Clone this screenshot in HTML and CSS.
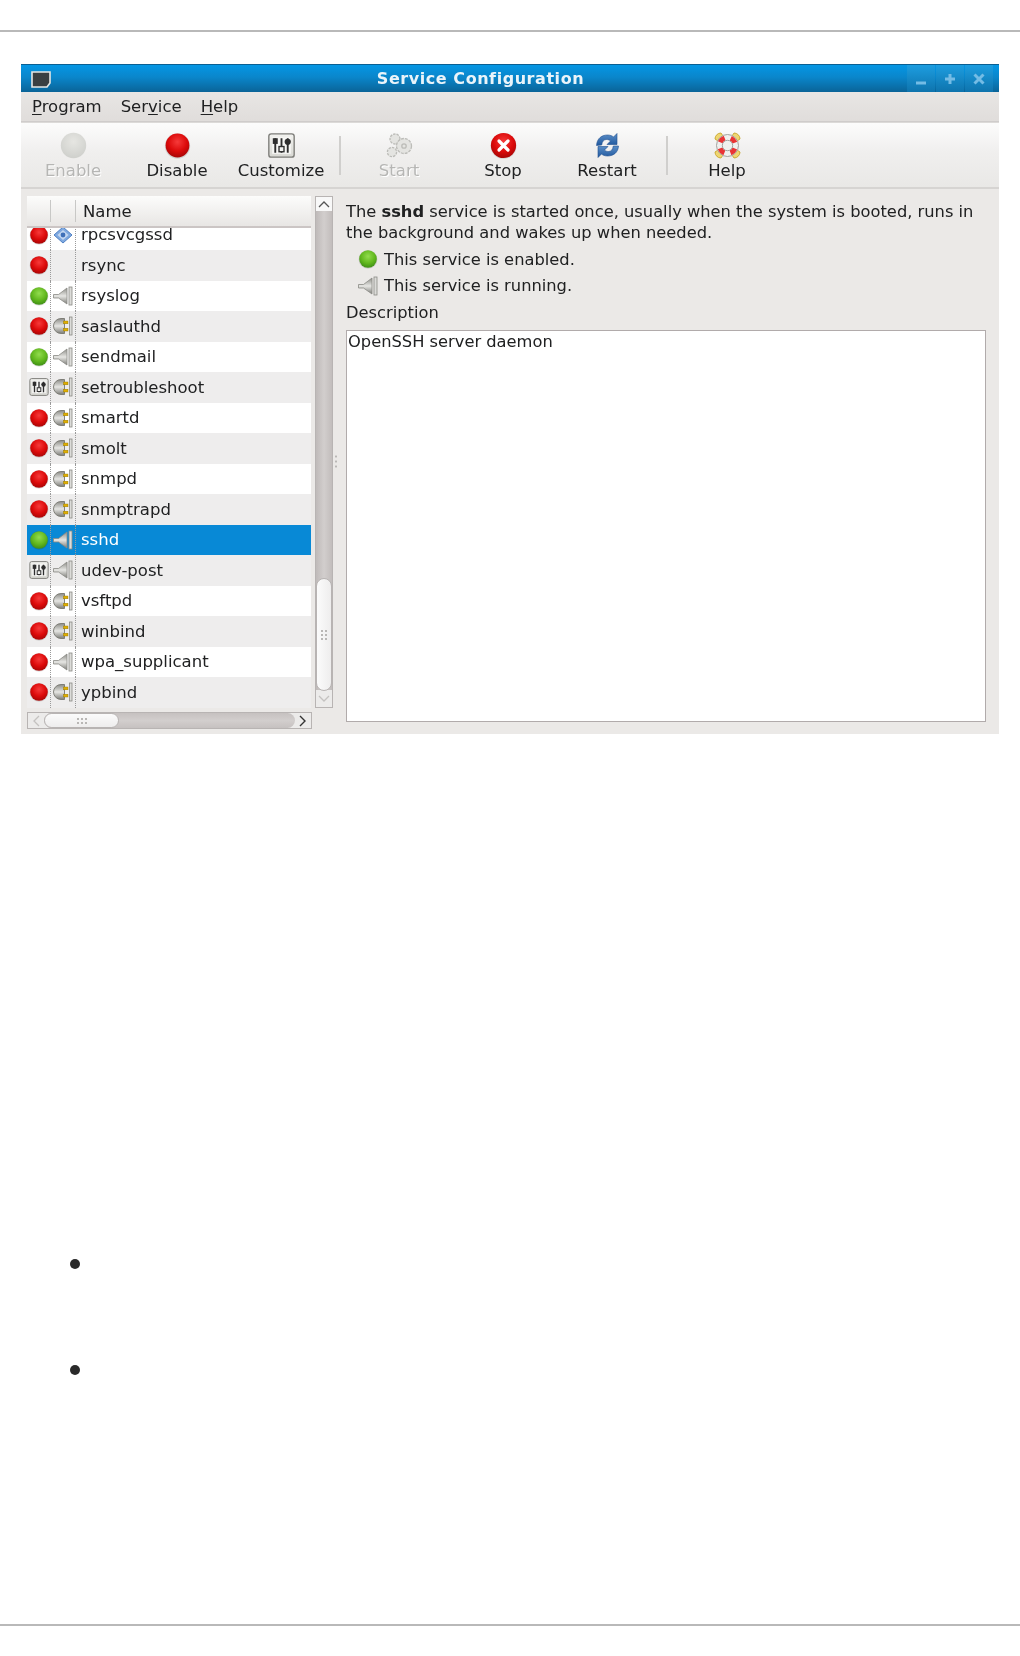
FILE: index.html
```html
<!DOCTYPE html>
<html lang="en">
<head>
  <meta charset="UTF-8" />
  <title>Service Configuration</title>
  <link rel="stylesheet" href="styles.css">
</head>
<body>
  <!-- shared icons -->
  <svg class="sprite" aria-hidden="true">
    <defs>
      <radialGradient id="g-red" cx="50%" cy="35%" r="65%">
        <stop offset="0" stop-color="#f63a3a"/><stop offset=".6" stop-color="#dc0a0a"/><stop offset="1" stop-color="#a80606"/>
      </radialGradient>
      <radialGradient id="g-green" cx="50%" cy="35%" r="65%">
        <stop offset="0" stop-color="#92dc4e"/><stop offset=".6" stop-color="#62b81e"/><stop offset="1" stop-color="#3f8f16"/>
      </radialGradient>
      <radialGradient id="g-off" cx="50%" cy="35%" r="65%">
        <stop offset="0" stop-color="#e6e6e2"/><stop offset="1" stop-color="#cfd0cc"/>
      </radialGradient>
      <linearGradient id="g-metal" x1="0" y1="0" x2="0" y2="1">
        <stop offset="0" stop-color="#8d8d88"/><stop offset=".5" stop-color="#e6e6e3"/><stop offset="1" stop-color="#7d7d78"/>
      </linearGradient>
      <linearGradient id="g-blue" x1="0" y1="0" x2="0" y2="1">
        <stop offset="0" stop-color="#5b8fc8"/><stop offset="1" stop-color="#20589e"/>
      </linearGradient>
      <linearGradient id="g-bezel" x1="0" y1="0" x2="0" y2="1">
        <stop offset="0" stop-color="#f2f2ef"/><stop offset="1" stop-color="#d8d8d3"/>
      </linearGradient>
      <symbol id="led-red" viewBox="0 0 20 20">
        <circle cx="10" cy="10.4" r="9.4" fill="#000" opacity=".12"/>
        <circle cx="10" cy="10" r="8.8" fill="url(#g-red)"/>
      </symbol>
      <symbol id="led-green" viewBox="0 0 20 20">
        <circle cx="10" cy="10.4" r="9.4" fill="#000" opacity=".12"/>
        <circle cx="10" cy="10" r="8.8" fill="url(#g-green)"/>
      </symbol>
      <symbol id="led-off" viewBox="0 0 20 20">
        <circle cx="10" cy="10" r="9.4" fill="url(#g-off)"/>
      </symbol>
      <symbol id="plug-on" viewBox="0 0 20 20">
        <path d="M0.5 8.500h5l8.500-6.500v16l-8.500-6h-5z" fill="url(#g-metal)" stroke="#8a8a85" stroke-width=".8"/>
        <rect x="16" y="1" width="3" height="18" fill="#dcdcd9" stroke="#8a8a85" stroke-width=".8"/>
      </symbol>
      <symbol id="plug-off" viewBox="0 0 20 20">
        <path d="M11.500 2.500h-3.500a7.500 7.500 0 0 0 0 15h3.500z" fill="url(#g-metal)" stroke="#77776f" stroke-width=".9"/>
        <rect x="10.500" y="5" width="4.500" height="2.800" fill="#e0ae00" stroke="#8f7400" stroke-width=".4"/>
        <rect x="10.500" y="12.200" width="4.500" height="2.800" fill="#e0ae00" stroke="#8f7400" stroke-width=".4"/>
        <rect x="16.400" y="1" width="2.600" height="18" fill="#dcdcd9" stroke="#8a8a85" stroke-width=".8"/>
      </symbol>
      <symbol id="question" viewBox="0 0 20 20">
        <path d="M10 2l9 8-9 8-9-8z" fill="#7fa9e0" stroke="#4f80c4"/>
        <path d="M10 5l5.500 5-5.500 5-5.500-5z" fill="#fff" opacity=".55"/>
        <circle cx="10" cy="10" r="2.400" fill="#3f70b8"/>
      </symbol>
      <symbol id="custom" viewBox="0 0 26 24">
        <rect x=".8" y=".8" width="24.400" height="22.400" rx="2.400" fill="url(#g-bezel)" stroke="#7c7c78" stroke-width="1.300"/>
        <rect x="4" y="4" width="18" height="16" fill="#f6f6f4"/>
        <path d="M7 5v14M13 5v14M19 5v14" stroke="#2e2e2e" stroke-width="1.800"/>
        <rect x="4.600" y="5" width="4.800" height="5.500" fill="#2e2e2e"/>
        <rect x="10.600" y="13" width="4.800" height="5" fill="#f2f2f0" stroke="#2e2e2e" stroke-width="1.300"/>
        <circle cx="19" cy="8.500" r="3" fill="#2e2e2e"/>
      </symbol>
      <symbol id="gears" viewBox="0 0 27 27">
        <g fill="#e4e4e1" stroke="#bcbcb8" stroke-width="1.300">
          <circle cx="9" cy="7" r="5" stroke-dasharray="2.500 1"/>
          <circle cx="18" cy="14" r="7.500" stroke-dasharray="3 1"/>
          <circle cx="6" cy="20" r="4.600" stroke-dasharray="2.500 1"/>
          <circle cx="18" cy="14" r="2.200"/>
        </g>
      </symbol>
      <symbol id="stop" viewBox="0 0 27 27">
        <circle cx="13.500" cy="14" r="13" fill="#000" opacity=".1"/>
        <circle cx="13.500" cy="13.500" r="12.600" fill="url(#g-red)"/>
        <path d="M9 9l9 9M18 9l-9 9" stroke="#fff" stroke-width="3.200" stroke-linecap="round"/>
      </symbol>
      <symbol id="restart" viewBox="0 0 24 27">
        <path d="M1 13.500C1.500 6 6.500 3 12 3c2.600 0 4.600.8 6 2l3.500-3.500v11h-10l3.500-3.500c-1-1-2.400-1.500-4-1.500-2.600 0-4.300 1.700-4.800 5.500z" fill="url(#g-blue)" stroke="#1f4f8f" stroke-width=".6"/>
        <path d="M23 14c-.5 7-5.500 10-11 10-2.600 0-4.600-.8-6-2l-3.500 3.500v-11h10l-3.500 3.500c1 1 2.400 1.500 4 1.500 2.600 0 4.300-1.700 4.800-5.500z" fill="url(#g-blue)" stroke="#1f4f8f" stroke-width=".6"/>
      </symbol>
      <symbol id="help" viewBox="0 0 27 27">
        <g fill="#efd670" stroke="#c6a52e" stroke-width=".9">
          <path d="M1 7a6 6 0 0 1 6-6l2 3-5 5z"/><path d="M26 7a6 6 0 0 0-6-6l-2 3 5 5z"/>
          <path d="M1 20a6 6 0 0 0 6 6l2-3-5-5z"/><path d="M26 20a6 6 0 0 1-6 6l-2-3 5-5z"/>
        </g>
        <circle cx="13.500" cy="13.500" r="11" fill="#f0f0ee" stroke="#9a9a96" stroke-width=".9"/>
        <circle cx="13.500" cy="13.500" r="8" fill="none" stroke="#ea3434" stroke-width="5" stroke-dasharray="6.280 6.280" stroke-dashoffset="-3.140"/>
        <circle cx="13.500" cy="13.500" r="5.200" fill="#f0f0ee" stroke="#9a9a96" stroke-width=".9"/>
      </symbol>
    </defs>
  </svg>

  <hr class="rule rule-top">

  <div class="window">
    <div class="titlebar">
      <svg class="win-icon" width="20" height="18" viewBox="0 0 20 18">
        <path d="M1 2h18v11l-3 4H1z" fill="#3a3f42" stroke="#e6e6e4" stroke-width="1.600"/>
      </svg>
      <div class="win-title">Service Configuration</div>
      <div class="win-buttons">
        <div class="win-btn"><svg width="12" height="12" viewBox="0 0 12 12"><path d="M1 10h10" stroke="#74bce5" stroke-width="3"/></svg></div>
        <div class="win-btn"><svg width="12" height="12" viewBox="0 0 12 12"><path d="M1 6h10M6 1v10" stroke="#74bce5" stroke-width="3"/></svg></div>
        <div class="win-btn"><svg width="12" height="12" viewBox="0 0 12 12"><path d="M1.500 1.500l9 9M10.500 1.500l-9 9" stroke="#74bce5" stroke-width="3"/></svg></div>
      </div>
    </div>

    <div class="menubar">
      <span class="menu-item"><u>P</u>rogram</span>
      <span class="menu-item">Ser<u>v</u>ice</span>
      <span class="menu-item"><u>H</u>elp</span>
    </div>

    <div class="toolbar">
      <div class="tool disabled"><svg width="27" height="27"><use href="#led-off"/></svg><span>Enable</span></div>
      <div class="tool"><svg width="27" height="27"><use href="#led-red"/></svg><span>Disable</span></div>
      <div class="tool"><svg width="27" height="27"><use href="#custom"/></svg><span>Customize</span></div>
      <div class="tool-sep"></div>
      <div class="tool disabled"><svg width="27" height="27"><use href="#gears"/></svg><span>Start</span></div>
      <div class="tool"><svg width="27" height="27"><use href="#stop"/></svg><span>Stop</span></div>
      <div class="tool"><svg width="27" height="27"><use href="#restart"/></svg><span>Restart</span></div>
      <div class="tool-sep"></div>
      <div class="tool"><svg width="27" height="27"><use href="#help"/></svg><span>Help</span></div>
    </div>

    <div class="content">
      <div class="list-pane">
        <div class="list-top">
          <div class="list">
            <div class="list-head">
              <div class="head-cell"></div>
              <div class="head-cell"></div>
              <div class="head-name">Name</div>
            </div>
            <div class="list-body">
              <div class="row row-cut"><div class="cell"><svg width="20" height="20"><use href="#led-red"/></svg></div><div class="cell"><svg width="20" height="20"><use href="#question"/></svg></div><div class="name">rpcsvcgssd</div></div>
              <div class="row"><div class="cell"><svg width="20" height="20"><use href="#led-red"/></svg></div><div class="cell"></div><div class="name">rsync</div></div>
              <div class="row"><div class="cell"><svg width="20" height="20"><use href="#led-green"/></svg></div><div class="cell"><svg width="20" height="20"><use href="#plug-on"/></svg></div><div class="name">rsyslog</div></div>
              <div class="row"><div class="cell"><svg width="20" height="20"><use href="#led-red"/></svg></div><div class="cell"><svg width="20" height="20"><use href="#plug-off"/></svg></div><div class="name">saslauthd</div></div>
              <div class="row"><div class="cell"><svg width="20" height="20"><use href="#led-green"/></svg></div><div class="cell"><svg width="20" height="20"><use href="#plug-on"/></svg></div><div class="name">sendmail</div></div>
              <div class="row"><div class="cell"><svg width="20" height="18"><use href="#custom"/></svg></div><div class="cell"><svg width="20" height="20"><use href="#plug-off"/></svg></div><div class="name">setroubleshoot</div></div>
              <div class="row"><div class="cell"><svg width="20" height="20"><use href="#led-red"/></svg></div><div class="cell"><svg width="20" height="20"><use href="#plug-off"/></svg></div><div class="name">smartd</div></div>
              <div class="row"><div class="cell"><svg width="20" height="20"><use href="#led-red"/></svg></div><div class="cell"><svg width="20" height="20"><use href="#plug-off"/></svg></div><div class="name">smolt</div></div>
              <div class="row"><div class="cell"><svg width="20" height="20"><use href="#led-red"/></svg></div><div class="cell"><svg width="20" height="20"><use href="#plug-off"/></svg></div><div class="name">snmpd</div></div>
              <div class="row"><div class="cell"><svg width="20" height="20"><use href="#led-red"/></svg></div><div class="cell"><svg width="20" height="20"><use href="#plug-off"/></svg></div><div class="name">snmptrapd</div></div>
              <div class="row selected"><div class="cell"><svg width="20" height="20"><use href="#led-green"/></svg></div><div class="cell"><svg width="20" height="20"><use href="#plug-on"/></svg></div><div class="name">sshd</div></div>
              <div class="row"><div class="cell"><svg width="20" height="18"><use href="#custom"/></svg></div><div class="cell"><svg width="20" height="20"><use href="#plug-on"/></svg></div><div class="name">udev-post</div></div>
              <div class="row"><div class="cell"><svg width="20" height="20"><use href="#led-red"/></svg></div><div class="cell"><svg width="20" height="20"><use href="#plug-off"/></svg></div><div class="name">vsftpd</div></div>
              <div class="row"><div class="cell"><svg width="20" height="20"><use href="#led-red"/></svg></div><div class="cell"><svg width="20" height="20"><use href="#plug-off"/></svg></div><div class="name">winbind</div></div>
              <div class="row"><div class="cell"><svg width="20" height="20"><use href="#led-red"/></svg></div><div class="cell"><svg width="20" height="20"><use href="#plug-on"/></svg></div><div class="name">wpa_supplicant</div></div>
              <div class="row"><div class="cell"><svg width="20" height="20"><use href="#led-red"/></svg></div><div class="cell"><svg width="20" height="20"><use href="#plug-off"/></svg></div><div class="name">ypbind</div></div>
            </div>
          </div>

          <div class="vscroll">
            <div class="step step-up">
              <svg width="12" height="8" viewBox="0 0 12 8"><path d="M1 7l5-5 5 5" fill="none" stroke="#555" stroke-width="1.300"/></svg>
            </div>
            <div class="vtrough"></div>
            <div class="vthumb"><span class="grip"></span></div>
            <div class="step step-down">
              <svg width="12" height="8" viewBox="0 0 12 8"><path d="M1 1l5 5 5-5" fill="none" stroke="#c4c2c0" stroke-width="1.300"/></svg>
            </div>
          </div>
        </div>

        <div class="hscroll">
          <div class="hstep">
            <svg width="8" height="12" viewBox="0 0 8 12"><path d="M7 1L2 6l5 5" fill="none" stroke="#c4c2c0" stroke-width="1.300"/></svg>
          </div>
          <div class="htrough">
            <div class="hthumb"><span class="grip"></span></div>
          </div>
          <div class="hstep">
            <svg width="8" height="12" viewBox="0 0 8 12"><path d="M1 1l5 5-5 5" fill="none" stroke="#333" stroke-width="1.400"/></svg>
          </div>
        </div>
      </div>

      <div class="pane-handle"><span class="grip grip-thin"></span></div>

      <div class="detail">
        <p class="summary">The <b>sshd</b> service is started once, usually when the system is booted, runs in the background and wakes up when needed.</p>
        <div class="status-list">
          <div class="status"><svg width="20" height="20"><use href="#led-green"/></svg><span>This service is enabled.</span></div>
          <div class="status"><svg width="20" height="20"><use href="#plug-on"/></svg><span>This service is running.</span></div>
        </div>
        <div class="desc-label">Description</div>
        <div class="desc-box">OpenSSH server daemon</div>
      </div>
    </div>
  </div>

  <div class="bullets">
    <div class="bullet"></div>
    <div class="bullet"></div>
  </div>

  <hr class="rule rule-bottom">
</body>
</html>
```

FILE: styles.css
```css
* {
  margin: 0;
  padding: 0;
  box-sizing: border-box;
}

body {
  background-color: #fff;
  font-family: 'DejaVu Sans', sans-serif;
  font-size: 16.5px;
  color: #202122;
}

.sprite {
  position: absolute;
  width: 0;
  height: 0;
}

.rule {
  border: none;
  height: 2px;
  background-color: #b9b9b9;
}

.rule-top {
  margin-top: 30px;
}

.rule-bottom {
  margin-top: 249px;
}

/* window */
.window {
  width: 978px;
  height: 670px;
  margin: 32px 0 0 21px;
  background-color: #ebe9e7;
  filter: blur(0.35px);
}

.titlebar {
  height: 28px;
  display: flex;
  align-items: center;
  position: relative;
  padding-left: 10px;
  border-top: 1px solid #0b5f92;
  background: linear-gradient(#0496e4, #0a86cb 45%, #0a6498);
}

.win-icon {
  flex: none;
}

.win-title {
  flex: 1;
  text-align: center;
  margin-left: -15px;
  padding-right: 74px;
  color: #eaf4fa;
  font-weight: bold;
  font-size: 16px;
  letter-spacing: 0.55px;
}

.win-buttons {
  position: absolute;
  top: 0;
  right: 6px;
  height: 27px;
  display: flex;
  gap: 1px;
}

.win-btn {
  width: 28px;
  display: flex;
  align-items: center;
  justify-content: center;
  background: linear-gradient(#1d9de0, #0e74ad);
}

.menubar {
  height: 30px;
  display: flex;
  align-items: center;
  gap: 19px;
  padding-left: 11px;
  background: linear-gradient(#e8e6e4, #e0dddb);
  border-bottom: 1px solid #cfcccb;
}

.menu-item u {
  text-underline-offset: 2px;
}

/* toolbar */
.toolbar {
  height: 67px;
  display: flex;
  border-top: 1px solid #dcdad8;
  border-bottom: 2px solid #d6d4d2;
  background: linear-gradient(#fcfcfc, #f0efee 45%, #e9e8e6);
}

.tool {
  width: 104px;
  display: flex;
  flex-direction: column;
  align-items: center;
  padding-top: 9px;
}

.tool svg {
  display: block;
}

.tool span {
  margin-top: 2px;
  line-height: 20px;
}

.tool.disabled span {
  color: #b6b6b4;
  text-shadow: 1px 1px 0 #fff;
}

.tool-sep {
  width: 2px;
  height: 39px;
  margin: 13px 6px 0;
  background-color: #d0cfcd;
}

.tool-sep:nth-of-type(8) {
  margin: 13px 7px 0;
}

/* service list */
.content {
  height: 545px;
  display: flex;
}

.list-pane {
  width: 312px;
  padding: 7px 0 0 6px;
}

.list-top {
  display: flex;
  gap: 4px;
}

.list {
  width: 285px;
}

.list-head {
  height: 32px;
  display: flex;
  align-items: center;
  background: linear-gradient(#fcfcfb, #e8e6e4);
  border-bottom: 2px solid #cbc5c4;
}

.head-cell {
  width: 25px;
  height: 22px;
  border-right: 1px solid #c8c8c6;
}

.head-cell:first-child {
  width: 24px;
}

.head-name {
  padding-left: 7px;
}

.list-body {
  height: 480px;
  overflow: hidden;
}

.row {
  height: 30.5px;
  display: flex;
  align-items: center;
  background-color: #fff;
}

.row:nth-child(even) {
  background-color: #eeeded;
}

.row-cut {
  margin-top: -8.5px;
}

.row.selected {
  background-color: #0889d6;
  color: #fff;
}

.cell {
  width: 25px;
  height: 100%;
  display: flex;
  align-items: center;
  justify-content: center;
  border-right: 1px dotted #9a9a9a;
}

.cell:first-child {
  width: 24px;
}

.name {
  padding-left: 5px;
}

/* scrollbars */
.vscroll {
  width: 18px;
  height: 512px;
  position: relative;
  display: flex;
  flex-direction: column;
  border: 1px solid #b8b4b3;
  background-color: #ecebea;
}

.step {
  flex: none;
  display: flex;
  align-items: center;
  justify-content: center;
}

.step-up {
  height: 14px;
  background-color: #f8f8f8;
}

.step-down {
  height: 17px;
}

.vtrough {
  flex: 1;
  background: linear-gradient(to right, #bfbab9, #d2cecd 50%, #c2bdbc);
}

.vthumb {
  position: absolute;
  left: 0;
  right: 0;
  top: 381px;
  height: 113px;
  display: flex;
  align-items: center;
  justify-content: center;
  border: 1px solid #b8b4b3;
  border-radius: 8px;
  background: linear-gradient(to right, #fbfbfb, #eeeded);
}

.hscroll {
  width: 285px;
  height: 17px;
  margin-top: 4px;
  display: flex;
  align-items: center;
  border: 1px solid #b8b4b3;
  background-color: #ecebea;
}

.hstep {
  width: 16px;
  flex: none;
  display: flex;
  align-items: center;
  justify-content: center;
}

.htrough {
  flex: 1;
  height: 100%;
  background: linear-gradient(#c6c1c0, #d2cecd 50%, #c6c1c0);
  border-radius: 8px;
}

.hthumb {
  width: 75px;
  height: 100%;
  display: flex;
  align-items: center;
  justify-content: center;
  border: 1px solid #b8b4b3;
  border-radius: 8px;
  background: linear-gradient(#fbfbfb, #eeeded);
}

.grip {
  display: block;
  width: 12px;
  height: 8px;
  background-image: radial-gradient(circle, #b9b7b5 1px, transparent 1.2px);
  background-size: 4px 4px;
}

.vthumb .grip {
  width: 8px;
  height: 12px;
}

.pane-handle {
  width: 12px;
  display: flex;
  align-items: center;
  padding-left: 1px;
}

.grip-thin {
  width: 4px;
  height: 16px;
  background-size: 4px 5px;
}

/* details */
.detail {
  width: 640px;
  padding-top: 12px;
  margin-left: 1px;
  font-size: 16.3px;
  line-height: 21px;
}

.status-list {
  margin-top: 3px;
}

.status {
  height: 26.5px;
  display: flex;
  align-items: center;
  gap: 6px;
  padding-left: 12px;
}

.desc-label {
  margin-top: 3px;
}

.desc-box {
  height: 392px;
  margin-top: 7px;
  padding-left: 1px;
  border: 1px solid #b1abab;
  background-color: #fff;
}

/* empty list from the page below the screenshot */
.bullets {
  margin: 525px 0 0 70px;
  display: flex;
  flex-direction: column;
  gap: 96px;
}

.bullet {
  width: 10px;
  height: 10px;
  border-radius: 50%;
  background-color: #2a2a2a;
}
```
